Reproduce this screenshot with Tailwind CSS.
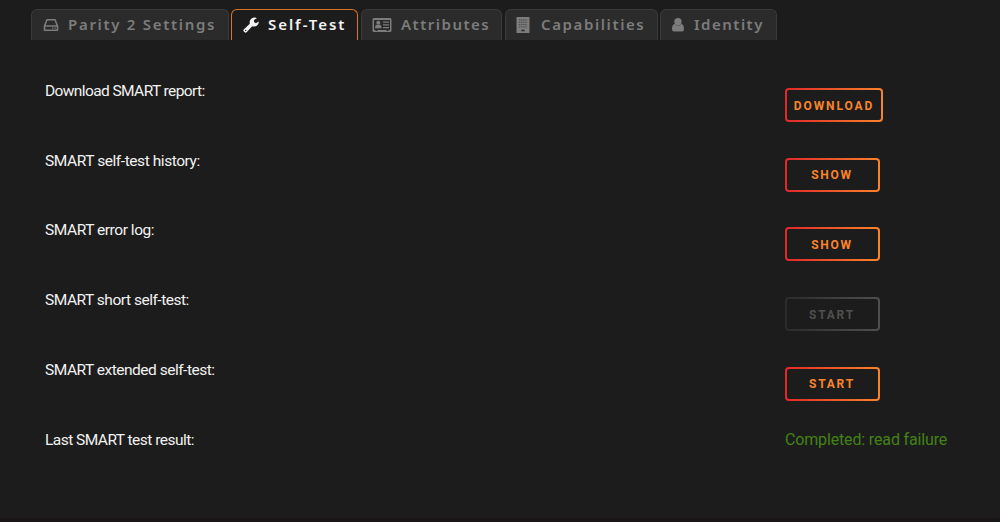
<!DOCTYPE html>
<html lang="en">
<head>
    <meta charset="UTF-8">
    <meta name="viewport" content="width=device-width, initial-scale=1.0">
    <title>Parity 2 - Self-Test</title>
    <script src="https://cdn.jsdelivr.net/npm/@tailwindcss/browser@4"></script>
</head>
<body class="h-screen overflow-hidden bg-[#1c1c1c] border-b-4 border-[#191518] font-['Roboto',sans-serif] text-[#f2f2f2]">
    <!-- Tabs -->
    <nav class="flex pt-[9px] pl-[31px] font-['Noto_Sans',sans-serif] text-[15px] font-semibold text-[#7c7c7c]">
        <button class="flex items-center w-[198px] h-[31px] mr-[2px] pl-[11px] rounded-t-md border border-b-0 border-[#3a3a3a] bg-[#2b2b2b]">
            <svg class="w-4 h-4 mr-[9px] shrink-0" viewBox="0 0 16 16" fill="none" stroke="currentColor" stroke-width="1.6" stroke-linejoin="round"><path d="M1.5 9 4 2.8h8L14.5 9v4.2h-13zM1.5 9h13"/><path d="M9 11.2h1.3M11.5 11.2h1.3" stroke-width="1.3"/></svg>
            <span class="pb-0.5 whitespace-nowrap tracking-[1.7px]">Parity 2 Settings</span>
        </button>
        <button class="flex items-center w-[127px] h-[31px] mr-[3px] pl-[11px] rounded-t-md border border-b-0 border-x-[#d87628] border-t-[#d87628] bg-[#1c1c1c] text-[#f2f2f2]">
            <svg class="w-4 h-4 mr-[9px] shrink-0" viewBox="0 0 16 16" fill="currentColor"><path fill-rule="evenodd" d="M.7 12.5 6.8 6.8C6 3.5 8.5.5 11.8.6c.8 0 1.5.2 2.1.6L11 3v2.1l1.9 1.1L15.7 4.5c.3 3-2.2 5.3-5.2 5-.5 0-.9-.1-1.3-.3L3.6 15.2c-.6.6-1.4.6-2 0l-.9-.9c-.5-.5-.5-1.3 0-1.8zM2.7 12.7a.7.7 0 1 0 0 1.4.7.7 0 0 0 0-1.4z"/></svg>
            <span class="pb-0.5 whitespace-nowrap tracking-[1.95px]">Self-Test</span>
        </button>
        <button class="flex items-center w-[141px] h-[31px] mr-[3px] pl-[10px] rounded-t-md border border-b-0 border-[#3a3a3a] bg-[#2b2b2b]">
            <svg class="w-5 h-4 mr-[9px] shrink-0" viewBox="0 0 20 16" fill="currentColor"><path fill-rule="evenodd" d="M2 1h16q1.5 0 1.5 1.5v11Q19.5 15 18 15H2Q.5 15 .5 13.5v-11Q.5 1 2 1zm0 2v10h1.5v1h2v-1h9v1h2v-1H18V3z"/><circle cx="6.3" cy="5.8" r="2"/><path d="M3 11.2c0-2.4.8-3.5 2.200-3.500q1.100.7 2.200 0c1.400 0 2.200 1.100 2.200 3.500zM11 4.500h6v1.300h-6zM11 7.200h6v1.300h-6zM11 9.900h6v1.300h-6z"/></svg>
            <span class="pb-0.5 whitespace-nowrap tracking-[1.5px]">Attributes</span>
        </button>
        <button class="flex items-center w-[153px] h-[31px] mr-[2px] pl-[10px] rounded-t-md border border-b-0 border-[#3a3a3a] bg-[#2b2b2b]">
            <svg class="w-[14px] h-4 mr-[11px] shrink-0" viewBox="0 0 14 16" fill="currentColor"><path d="M.5 0h13v16H.5z"/><path d="M3 3h8.5M3 5.3h8.5M3 7.6h8.5M3 9.9h8.5" stroke="#2b2b2b" stroke-width=".7" stroke-dasharray="1.3 .8" fill="none"/><path d="M5.3 12.7h3.4v1.6H5.3z" fill="#2b2b2b"/></svg>
            <span class="pb-0.5 whitespace-nowrap tracking-[1.6px]">Capabilities</span>
        </button>
        <button class="flex items-center w-[117px] h-[31px] pl-[11px] rounded-t-md border border-b-0 border-[#3a3a3a] bg-[#2b2b2b]">
            <svg class="w-3 h-4 mr-[10px] shrink-0" viewBox="0 0 12 16" fill="currentColor"><circle cx="6" cy="4.7" r="3.7"/><path d="M2.5 7Q6 10.3 9.5 7C11.3 7.4 12 9.3 12 12q0 2.500-2 2.500H2Q0 14.500 0 12C0 9.300.7 7.400 2.500 7z"/></svg>
            <span class="pb-0.5 whitespace-nowrap tracking-[1.5px]">Identity</span>
        </button>
    </nav>

    <!-- Self-test actions -->
    <dl class="grid grid-cols-[740px_1fr] auto-rows-[69.7px] pt-10 pl-[45px] text-[15.5px] leading-[22px]">
        <dt><span class="tracking-[-0.6px]">Download SMART report:</span></dt>
        <dd class="pt-2"><button class="w-[98px] h-[34px] pt-0.5 rounded border-2 border-transparent [background:linear-gradient(#1c1c1c,#1c1c1c)_padding-box,linear-gradient(90deg,#e22828,#f9842c)_border-box] text-[12px] leading-4 font-bold text-[#f9842c]"><span class="tracking-[1.9px]">DOWNLOAD</span></button></dd>
        <dt><span class="tracking-[-0.43px]">SMART self-test history:</span></dt>
        <dd class="pt-2"><button class="w-[95px] h-[34px] rounded border-2 border-transparent [background:linear-gradient(#1c1c1c,#1c1c1c)_padding-box,linear-gradient(90deg,#e22828,#f9842c)_border-box] text-[12px] leading-4 font-bold text-[#f9842c]"><span class="mr-px tracking-[1.75px]">SHOW</span></button></dd>
        <dt><span class="tracking-[-0.45px]">SMART error log:</span></dt>
        <dd class="pt-2"><button class="w-[95px] h-[34px] pt-0.5 rounded border-2 border-transparent [background:linear-gradient(#1c1c1c,#1c1c1c)_padding-box,linear-gradient(90deg,#e22828,#f9842c)_border-box] text-[12px] leading-4 font-bold text-[#f9842c]"><span class="mr-px tracking-[1.75px]">SHOW</span></button></dd>
        <dt><span class="tracking-[-0.48px]">SMART short self-test:</span></dt>
        <dd class="pt-2"><button class="w-[95px] h-[34px] pt-0.5 rounded border-2 border-transparent [background:linear-gradient(#1c1c1c,#1c1c1c)_padding-box,linear-gradient(90deg,#2b2b2b,#4f4f4f)_border-box] text-[12px] leading-4 font-bold text-[#4f4f4f]" disabled><span class="mr-px tracking-[1.75px]">START</span></button></dd>
        <dt><span class="tracking-[-0.49px]">SMART extended self-test:</span></dt>
        <dd class="pt-2"><button class="w-[95px] h-[34px] rounded border-2 border-transparent [background:linear-gradient(#1c1c1c,#1c1c1c)_padding-box,linear-gradient(90deg,#e22828,#f9842c)_border-box] text-[12px] leading-4 font-bold text-[#f9842c]"><span class="mr-px tracking-[1.75px]">START</span></button></dd>
        <dt class="pt-px"><span class="tracking-[-0.53px]">Last SMART test result:</span></dt>
        <dd class="pt-px text-base leading-[22px] text-[#438216]"><span class="tracking-[-0.15px]">Completed: read failure</span></dd>
    </dl>
</body>
</html>
